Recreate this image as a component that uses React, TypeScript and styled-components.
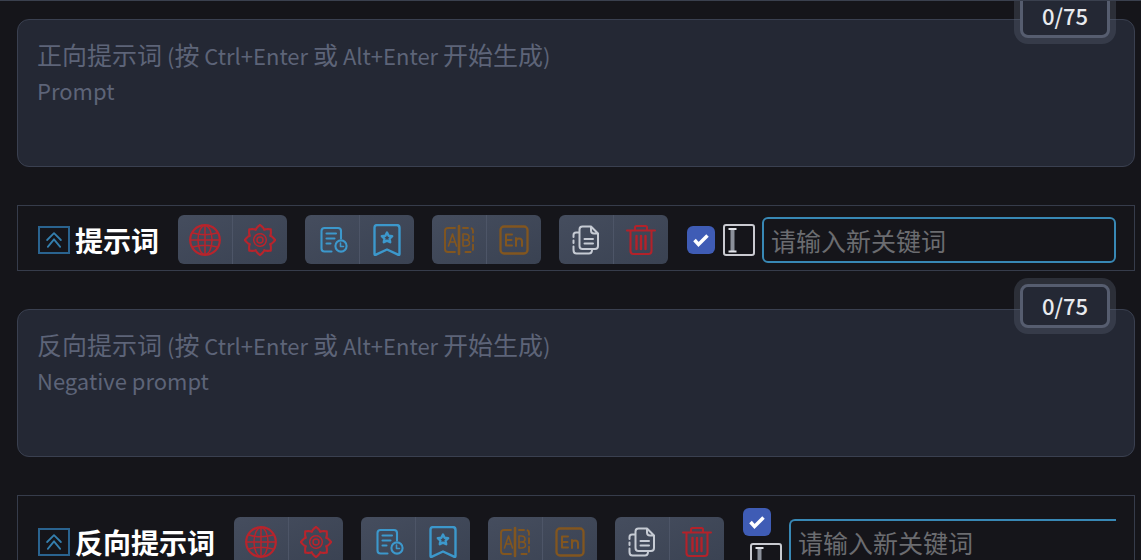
import React from "react";
import styled, { createGlobalStyle, css } from "styled-components";

const GlobalStyle = createGlobalStyle`
  *, *::before, *::after { box-sizing: border-box; }
  body {
    margin: 0;
    background: #15151a;
    color: #fff;
    font-family: "Noto Sans CJK SC", "Noto Sans", sans-serif;
  }
  button, input, textarea { font: inherit; margin: 0; }
`;

const Page = styled.main`
  height: 100vh;
  overflow: hidden;
  display: flex;
  flex-direction: column;
  gap: 38px;
  padding: 18px 6px 0 17px;
  border-top: 1px solid #3a404e;
`;

const Field = styled.div`
  position: relative;
  flex: none;
`;

const PromptBox = styled.textarea`
  display: block;
  width: 100%;
  height: 148px;
  padding: 17px 19px;
  border: 1px solid #3a4050;
  border-radius: 12px;
  background: #242834;
  color: #e5e7eb;
  font-size: 22px;
  line-height: 36px;
  resize: none;
  outline: none;
`;

/* Bilingual hint shown while the box is empty; Latin text is set smaller than Chinese. */
const Hint = styled.div`
  position: absolute;
  inset: 17px 20px auto;
  display: none;
  color: #5d6478;
  font-size: 22px;
  line-height: 36px;
  pointer-events: none;
  ${PromptBox}:placeholder-shown + & { display: block; }
`;

const HintLine = styled.div`
  height: 36px;
  white-space: nowrap;
`;

const Han = styled.span`
  font-size: 25px;
`;

const Counter = styled.span`
  position: absolute;
  top: -25px;
  right: 25px;
  width: 90px;
  height: 44px;
  border: 3px solid #565d6f;
  border-radius: 8px;
  background: #242834;
  box-shadow: 0 0 0 6px rgba(86, 93, 111, 0.36);
  color: #e8eaee;
  font-size: 22px;
  font-weight: 500;
  line-height: 36px;
  text-align: center;
`;

const Panel = styled.section`
  flex: none;
  display: flex;
  align-items: center;
  gap: 18px;
  min-height: 66px;
  padding: 3px 18px 0 20px;
  border: 1px solid #363c4b;
`;

const TallPanel = styled(Panel)`
  min-height: 90px;
`;

const Title = styled.div`
  display: flex;
  align-items: center;
  gap: 5px;
  padding-right: 1px;
`;

const Heading = styled.h2`
  margin: 0;
  font-size: 28px;
  font-weight: 700;
  line-height: 40px;
  white-space: nowrap;
`;

const CollapseButton = styled.button`
  display: flex;
  align-items: center;
  justify-content: center;
  width: 32px;
  height: 28px;
  padding: 0;
  border: 2px solid #2a638f;
  background: transparent;
  color: #347fae;
`;

const Group = styled.div`
  flex: none;
  display: flex;
  width: 109px;
  height: 49px;
  border-radius: 6px;
  overflow: hidden;
  background: linear-gradient(to bottom right, #454d5e, #3a4252);
`;

const IconButton = styled.button<{ $color: string }>`
  flex: 1;
  display: flex;
  align-items: center;
  justify-content: center;
  padding: 0;
  border: 0;
  background: transparent;
  color: ${(p) => p.$color};
  & + & { border-left: 1px solid #4d5567; }
`;

const Entry = styled.div`
  flex: 1;
  min-width: 0;
  display: flex;
  align-items: center;
  gap: 7px;
  padding-left: 1px;
`;

const Toggles = styled.div<{ $stacked?: boolean }>`
  display: flex;
  align-items: center;
  gap: 8px;
  ${(p) =>
    p.$stacked &&
    css`
      flex-direction: column;
      align-items: flex-start;
      width: 39px;
      gap: 7px;
      & > :last-child { align-self: flex-end; }
    `}
`;

const Tick = styled.span`
  display: grid;
  width: 28px;
  height: 28px;
  & > * { grid-area: 1 / 1; }
  svg { pointer-events: none; }
`;

const TickInput = styled.input`
  appearance: none;
  width: 28px;
  height: 28px;
  border-radius: 6px;
  background: #3f5cb5;
`;

const CursorButton = styled.button`
  display: flex;
  width: 32px;
  height: 32px;
  padding: 0;
  border: 2px solid #c9cad0;
  border-radius: 3px;
  background: transparent;
`;

const Keyword = styled.input<{ $open?: boolean }>`
  flex: 1;
  min-width: 0;
  height: 46px;
  padding: 0 7px;
  border: 2px solid #3888b5;
  border-radius: 6px;
  background: transparent;
  color: #e5e7eb;
  font-size: 25px;
  line-height: 36px;
  outline: none;
  ${(p) =>
    p.$open &&
    css`
      border-right: 0;
      border-radius: 6px 0 0 6px;
    `}
  &::placeholder { color: #6b6c70; opacity: 1; }
`;

type IconProps = { size?: number; width?: number; children: React.ReactNode };

const Icon = ({ size = 32, width = 2, children }: IconProps) => (
  <svg
    width={size}
    height={size}
    viewBox="0 0 32 32"
    fill="none"
    stroke="currentColor"
    strokeWidth={width}
    strokeLinecap="round"
    strokeLinejoin="round"
    aria-hidden="true"
  >
    {children}
  </svg>
);

const Globe = () => (
  <Icon width={1.5}>
    <circle cx="16" cy="16" r="14.800" strokeWidth="2.2" />
    <ellipse cx="16" cy="16" rx="7" ry="14.500" />
    <path d="M16 1v30M1 16h30M4 9q12 3.500 24 0M4 23q12-3.500 24 0" />
  </Icon>
);

const gearPoints = Array.from({ length: 161 }, (_, i) => {
  const a = (i / 160) * Math.PI * 2;
  const r = 13.1 + 2.1 * Math.cos(8 * a);
  const b = a - 0.05 * Math.sin(16 * a);
  return `${(16 + r * Math.sin(b)).toFixed(2)},${(16 - r * Math.cos(b)).toFixed(2)}`;
}).join(" ");

const Gear = () => (
  <Icon width={2.1}>
    <polygon points={gearPoints} />
    <circle cx="16" cy="16" r="6.300" strokeWidth="1.5" strokeDasharray="4 1" />
    <circle cx="16" cy="16" r="3" strokeWidth="1.5" />
  </Icon>
);

const History = () => (
  <Icon width={2.1}>
    <path d="M15.500 27.500H8.500q-3 0-3-3V7q0-3 3-3H22q3 0 3 3v7.500M10.500 9.500H20M10.500 14.500h8M10.500 19.500h4" />
    <circle cx="25" cy="22" r="5.600" />
    <path d="M24.500 19v3.500h3" strokeWidth="1.6" />
  </Icon>
);

const Favorite = () => (
  <Icon width={2.4}>
    <path d="M3.500 30V4q0-3 3-3h19q3 0 3 3v26q0 1.500-1.500.700L16 25.500 5 30.700q-1.500.8-1.500-.7Z" />
    <path d="m16 8.500 1.600 3.200 3.600.5-2.600 2.500.6 3.600-3.200-1.700-3.200 1.700.6-3.600-2.600-2.500 3.600-.5Z" />
  </Icon>
);

const Translate = () => (
  <Icon width={1.9}>
    <path d="M12 4H5Q2 4 2 7v18q0 3 3 3h7" />
    <path d="M16 2v28" strokeWidth="2.6" />
    <path d="M20 4h7q3 0 3 3v18q0 3-3 3h-7" strokeDasharray="5 3.500" />
    <path d="m5.500 22 4-12 4 12M7 18h5M20 10v12M20 10h2.500q3.500 0 3.500 3t-3.500 3H20M22.500 16q4 0 4 3t-4 3H20" strokeWidth="1.6" />
  </Icon>
);

const English = () => (
  <Icon width={2.3}>
    <rect x="2.500" y="2.500" width="27" height="27" rx="3.500" />
    <path d="M14 10.500H8v11h6M8 16h5.500M18 22v-8M18 17.500q0-3 3-3t3 3V22" strokeWidth="2" />
  </Icon>
);

const Copy = () => (
  <Icon width={2}>
    <path d="M12.500 2.500h8.500l7 7V22q0 3-3 3H12.500q-3 0-3-3V5.500q0-3 3-3ZM21 2.500v4q0 3 3 3h4M14.500 15h8.500M14.500 19.500h8.500" />
    <path d="M9 8.500H6Q3.500 8.500 3.500 11v2M3.500 16.500v2.500M3.500 22.500V26q0 3.500 3 3.500H19q2.500 0 3-3" />
  </Icon>
);

const Trash = () => (
  <Icon width={2.1}>
    <path d="M2 6.500h28M10 6V3.500Q10 2 11.500 2h9Q22 2 22 3.500V6M5.500 7v20q0 3 3 3h15q3 0 3-3V7" />
    <path d="M11.500 12v13M16 12v13M20.500 12v13" strokeWidth="2.4" />
  </Icon>
);

const Tools = () => (
  <>
    <Group>
      <IconButton type="button" $color="#b8242c" aria-label="语言"><Globe /></IconButton>
      <IconButton type="button" $color="#b8242c" aria-label="设置"><Gear /></IconButton>
    </Group>
    <Group>
      <IconButton type="button" $color="#3c98cc" aria-label="历史"><History /></IconButton>
      <IconButton type="button" $color="#3c98cc" aria-label="收藏"><Favorite /></IconButton>
    </Group>
    <Group>
      <IconButton type="button" $color="#82561f" aria-label="翻译"><Translate /></IconButton>
      <IconButton type="button" $color="#82561f" aria-label="英文"><English /></IconButton>
    </Group>
    <Group>
      <IconButton type="button" $color="#c6cbd4" aria-label="复制"><Copy /></IconButton>
      <IconButton type="button" $color="#b3222a" aria-label="删除"><Trash /></IconButton>
    </Group>
  </>
);

const mixScripts = (text: string) =>
  text
    .split(/([\u4e00-\u9fff]+)/)
    .map((part, i) => (i % 2 ? <Han key={i}>{part}</Han> : part));

type EditorProps = { title: string; hint: string[]; stacked?: boolean };

const PromptEditor = ({ title, hint, stacked }: EditorProps) => {
  const Bar = stacked ? TallPanel : Panel;
  return (
    <>
      <Field>
        <PromptBox placeholder=" " aria-label={title} />
        <Hint>
          {hint.map((line) => (
            <HintLine key={line}>{mixScripts(line)}</HintLine>
          ))}
        </Hint>
        <Counter>0/75</Counter>
      </Field>
      <Bar>
        <Title>
          <CollapseButton type="button" aria-label="折叠">
            <Icon size={22} width={2.6}>
              <path d="M6 16 16 6l10 10M7 26l9-11 9 11" />
            </Icon>
          </CollapseButton>
          <Heading>{title}</Heading>
        </Title>
        <Tools />
        <Entry>
          <Toggles $stacked={stacked}>
            <Tick>
              <TickInput type="checkbox" defaultChecked aria-label="启用" />
              <svg width="28" height="28" viewBox="0 0 28 28" fill="none" aria-hidden="true">
                <path d="m7.500 14 4 4.500 9-9" stroke="#fff" strokeWidth="3.500" />
              </svg>
            </Tick>
            <CursorButton type="button" aria-label="输入框">
              <svg width="28" height="28" viewBox="0 0 28 28" fill="none" aria-hidden="true">
                <path d="M7.500 3v22" stroke="#8b909a" strokeWidth="4" />
                <path d="M3.500 3h8M3.500 25.500h8" stroke="#e0e2e7" strokeWidth="2" />
              </svg>
            </CursorButton>
          </Toggles>
          <Keyword $open={stacked} placeholder="请输入新关键词" aria-label="新关键词" />
        </Entry>
      </Bar>
    </>
  );
};

export default function App() {
  return (
    <>
      <GlobalStyle />
      <Page>
        <PromptEditor
          title="提示词"
          hint={["正向提示词 (按 Ctrl+Enter 或 Alt+Enter 开始生成)", "Prompt"]}
        />
        <PromptEditor
          title="反向提示词"
          hint={["反向提示词 (按 Ctrl+Enter 或 Alt+Enter 开始生成)", "Negative prompt"]}
          stacked
        />
      </Page>
    </>
  );
}
